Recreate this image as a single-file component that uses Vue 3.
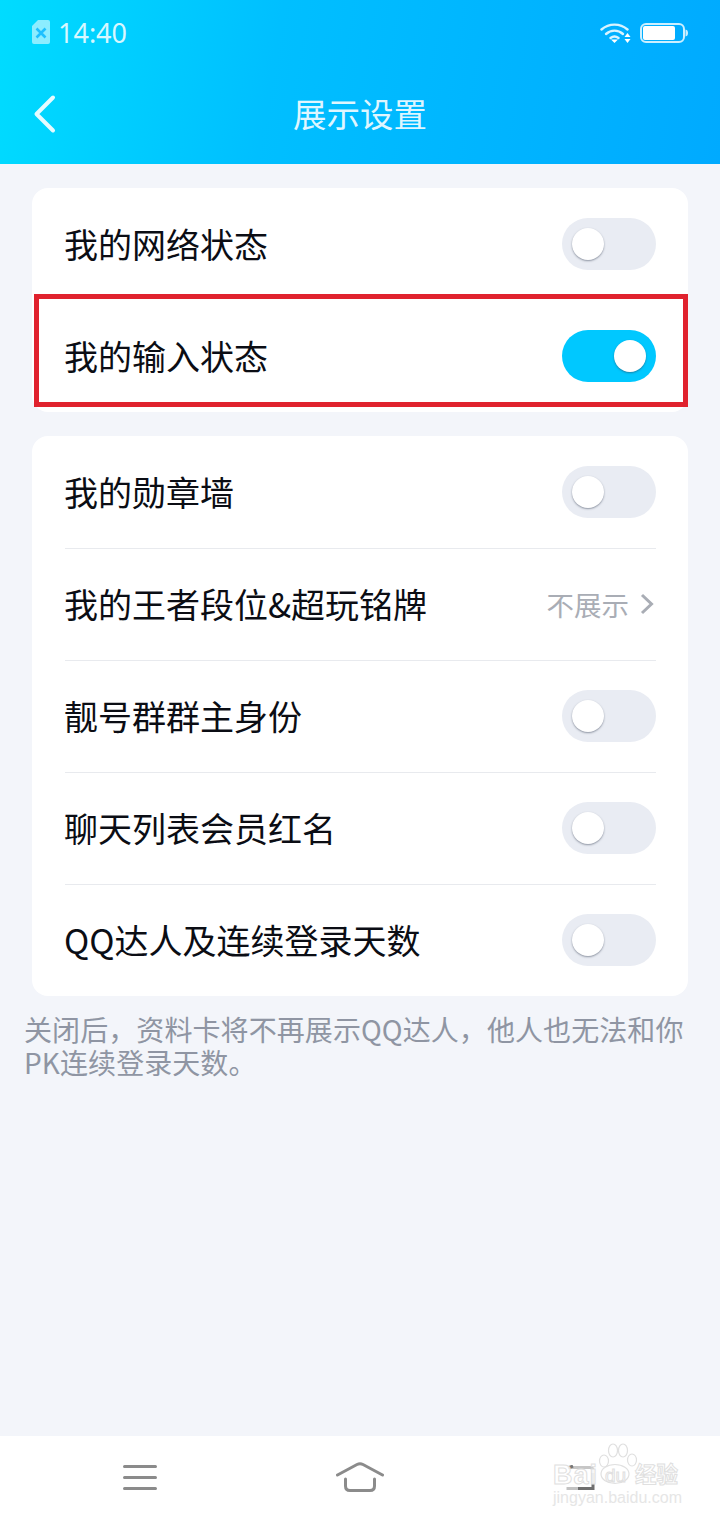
<script setup>
const group2 = [
  { label: '我的勋章墙', type: 'switch' },
  { label: '我的王者段位&超玩铭牌', type: 'link', value: '不展示' },
  { label: '靓号群群主身份', type: 'switch' },
  { label: '聊天列表会员红名', type: 'switch' },
  { label: 'QQ达人及连续登录天数', type: 'switch' }
]
</script>

<template>
  <div class="page">
    <header class="header">
      <div class="status">
        <div class="status-left">
          <svg class="sim" width="18" height="24" viewBox="0 0 18 24">
            <path d="M6 0H16a2 2 0 0 1 2 2V22a2 2 0 0 1-2 2H2a2 2 0 0 1-2-2V6z" fill="#fff" fill-opacity=".55" />
            <path d="M4.500 8.500l9 9M13.500 8.500l-9 9" stroke="#1ec0ff" stroke-width="2.600" fill="none" />
          </svg>
          <span class="time">14:40</span>
        </div>
        <div class="status-right">
          <svg width="32" height="22" viewBox="0 0 32 22" fill="none">
            <path d="M1.500 7.500C9 1 20 1 27.500 7.500" stroke="#fff" stroke-opacity=".85" stroke-width="2.400" stroke-linecap="round" />
            <path d="M6 12C11 7.500 18 7.500 23 12" stroke="#fff" stroke-opacity=".85" stroke-width="2.400" stroke-linecap="round" />
            <path d="M10.500 16C13 14 16 14 18.500 16" stroke="#fff" stroke-opacity=".85" stroke-width="2.400" stroke-linecap="round" />
            <path d="M11 17.500h7l-3.500 3.500z" fill="#fff" />
            <path d="M27.500 11l3 4h-6zM27.500 21l3-4h-6z" fill="#fff" />
          </svg>
          <svg width="48" height="20" viewBox="0 0 48 20" fill="none">
            <rect x="1" y="1" width="43" height="18" rx="5" stroke="#fff" stroke-opacity=".8" stroke-width="2" />
            <rect x="3" y="3" width="32" height="14" rx="2" fill="#fff" />
            <path d="M45.500 6.500c1.700 .3 2.500 1.500 2.500 3.500s-.8 3.200-2.500 3.500z" fill="#fff" fill-opacity=".8" />
          </svg>
        </div>
      </div>
      <div class="nav">
        <svg class="back" width="24" height="40" viewBox="0 0 24 40" fill="none">
          <path d="M20 3.500L3.500 20 20 36.500" stroke="#fff" stroke-opacity=".9" stroke-width="4" stroke-linecap="round" stroke-linejoin="round" />
        </svg>
        <h1 class="title">展示设置</h1>
      </div>
    </header>

    <main class="content">
      <section class="card">
        <div class="row first">
          <span class="label">我的网络状态</span>
          <span class="switch"><span class="knob"></span></span>
        </div>
        <div class="row first">
          <span class="label">我的输入状态</span>
          <span class="switch on"><span class="knob"></span></span>
        </div>
        <div class="highlight"></div>
      </section>

      <section class="card">
        <div v-for="(item, i) in group2" :key="item.label" class="row" :class="{ first: i === 0 }">
          <span class="label">{{ item.label }}</span>
          <span v-if="item.type === 'switch'" class="switch"><span class="knob"></span></span>
          <span v-else class="link">
            <span class="link-text">{{ item.value }}</span>
            <svg width="14" height="22" viewBox="0 0 14 22" fill="none">
              <path d="M2 2l9.500 9L2 20" stroke="#a9adb5" stroke-width="3" />
            </svg>
          </span>
        </div>
      </section>

      <p class="note">关闭后，资料卡将不再展示QQ达人，他人也无法和你PK连续登录天数。</p>
    </main>

    <footer class="bottom">
      <svg width="34" height="26" viewBox="0 0 34 26" fill="none">
        <path d="M1.500 2.500h31M1.500 13.500h31M1.500 24.500h31" stroke="#8b8b8b" stroke-width="3" stroke-linecap="round" />
      </svg>
      <svg width="48" height="30" viewBox="0 0 48 30" fill="none">
        <path d="M1.500 13L21 2.500q3-1.500 6 0L46.500 13" stroke="#8b8b8b" stroke-width="3" stroke-linecap="round" />
        <path d="M9.500 17v7q0 4.500 4.500 4.500h20q4.500 0 4.500-4.500v-7" stroke="#8b8b8b" stroke-width="3" stroke-linecap="round" />
      </svg>
      <svg class="nav-back" width="30" height="26" viewBox="0 0 30 26" fill="none">
        <path d="M3 2.500h22q3 0 3 3v3" stroke="#c6c6c6" stroke-width="3" />
        <path d="M3 3l5-2" stroke="#777" stroke-width="3" />
        <path d="M28 8v15.500H13" stroke="#6f6f6f" stroke-width="3" />
        <path d="M13 23.500H1.500" stroke="#c2c2c2" stroke-width="3" />
      </svg>
      <div class="watermark">
        <span class="wm-bai">Bai</span>
        <svg class="paw" width="42" height="42" viewBox="0 0 42 42" fill="none" stroke="#e0e0e0" stroke-width="1.200">
          <ellipse cx="7" cy="18" rx="4.500" ry="6" />
          <ellipse cx="16" cy="7.500" rx="4.500" ry="6.500" />
          <ellipse cx="26" cy="7.500" rx="4.500" ry="6.500" />
          <ellipse cx="35" cy="17" rx="4.500" ry="6" />
          <ellipse cx="18" cy="31" rx="14" ry="9.500" />
        </svg>
        <span class="wm-du">du</span>
        <span class="wm-cn">经验</span>
        <span class="wm-url">jingyan.baidu.com</span>
      </div>
    </footer>
  </div>
</template>

<style>
html, body { margin: 0; padding: 0; background: #f3f5fa; }
</style>

<style scoped>
.page {
  width: 720px;
  height: 1520px;
  display: flex;
  flex-direction: column;
  overflow: hidden;
  background: #f3f5fa;
  font-family: "Noto Sans CJK SC", "Noto Sans", sans-serif;
  color: #0b0d14;
}
.header {
  height: 164px;
  flex: none;
  background: linear-gradient(100deg, #00dcff 0%, #00bfff 38%, #00aaff 100%);
}
.status {
  height: 66px;
  display: flex;
  align-items: center;
  justify-content: space-between;
  padding: 0 32px;
}
.status-left { display: flex; align-items: center; gap: 8px; }
.sim { display: block; margin-top: -2px; }
.time {
  font-family: "Noto Sans", sans-serif;
  font-size: 27px;
  line-height: 32px;
  color: rgba(255, 255, 255, .85);
}
.status-right { display: flex; align-items: center; gap: 8px; }
.nav {
  position: relative;
  height: 98px;
  padding-bottom: 5px;
  box-sizing: border-box;
  display: flex;
  align-items: center;
  justify-content: center;
}
.back { position: absolute; left: 33px; top: 28px; }
.title {
  margin: 0;
  font-size: 33.500px;
  font-weight: 400;
  color: rgba(255, 255, 255, .88);
}
.content {
  flex: 1;
  display: flex;
  flex-direction: column;
  gap: 24px;
  padding: 24px 32px 0;
  box-sizing: border-box;
}
.card {
  background: #fff;
  border-radius: 16px;
  position: relative;
}
.row {
  height: 112px;
  margin: 0 32px 0 33px;
  display: flex;
  align-items: center;
  justify-content: space-between;
  box-shadow: inset 0 1px 0 #e8eaee;
}
.row.first { box-shadow: none; }
.label { font-size: 34px; line-height: 48px; margin-left: -1px; }
.switch {
  width: 94px;
  height: 52px;
  border-radius: 26px;
  background: #e9ecf3;
  display: flex;
  align-items: center;
  padding: 0 10px;
  box-sizing: border-box;
}
.switch.on { background: #00c8ff; justify-content: flex-end; }
.knob {
  width: 32px;
  height: 32px;
  border-radius: 50%;
  background: #fff;
  box-shadow: 0 1px 2px rgba(50, 60, 80, .5);
}
.link { display: flex; align-items: center; gap: 11px; margin-right: 2px; }
.link-text { font-size: 27.500px; line-height: 40px; color: #a9adb5; }
.highlight {
  position: absolute;
  left: 2px;
  top: 106px;
  width: 654px;
  height: 113px;
  box-sizing: border-box;
  border: 5px solid #e0222e;
}
.note {
  margin: -7px 0 0 -8px;
  width: 668px;
  font-size: 28px;
  line-height: 33px;
  letter-spacing: .08px;
  color: #8f95a3;
}
.bottom {
  height: 84px;
  flex: none;
  background: #fff;
  position: relative;
  display: grid;
  grid-template-columns: repeat(3, 220px);
  justify-items: center;
  align-items: center;
  padding: 0 30px 2px;
  box-sizing: border-box;
}
.nav-back { margin-top: 2px; }
.watermark {
  position: absolute;
  left: 550px;
  top: 6px;
  width: 135px;
  height: 68px;
}
.paw { position: absolute; left: 47px; top: 1px; }
.wm-bai, .wm-du {
  position: absolute;
  font-family: "Liberation Sans", sans-serif;
  font-weight: 700;
  color: rgba(255, 255, 255, .9);
  -webkit-text-stroke: 1px #e0e0e0;
}
.wm-bai { left: 3px; top: 18px; font-size: 27px; line-height: 30px; letter-spacing: 1px; }
.wm-du { left: 55px; top: 23px; font-size: 19px; line-height: 22px; font-weight: 400; }
.wm-cn {
  position: absolute;
  left: 85px;
  top: 19px;
  font-size: 21.500px;
  line-height: 24px;
  font-weight: 700;
  color: rgba(255, 255, 255, .9);
  -webkit-text-stroke: 1px #e0e0e0;
}
.wm-url {
  position: absolute;
  left: 3px;
  top: 47px;
  font-family: "Liberation Sans", sans-serif;
  font-size: 16px;
  line-height: 18px;
  color: #e6e6e6;
}
</style>
